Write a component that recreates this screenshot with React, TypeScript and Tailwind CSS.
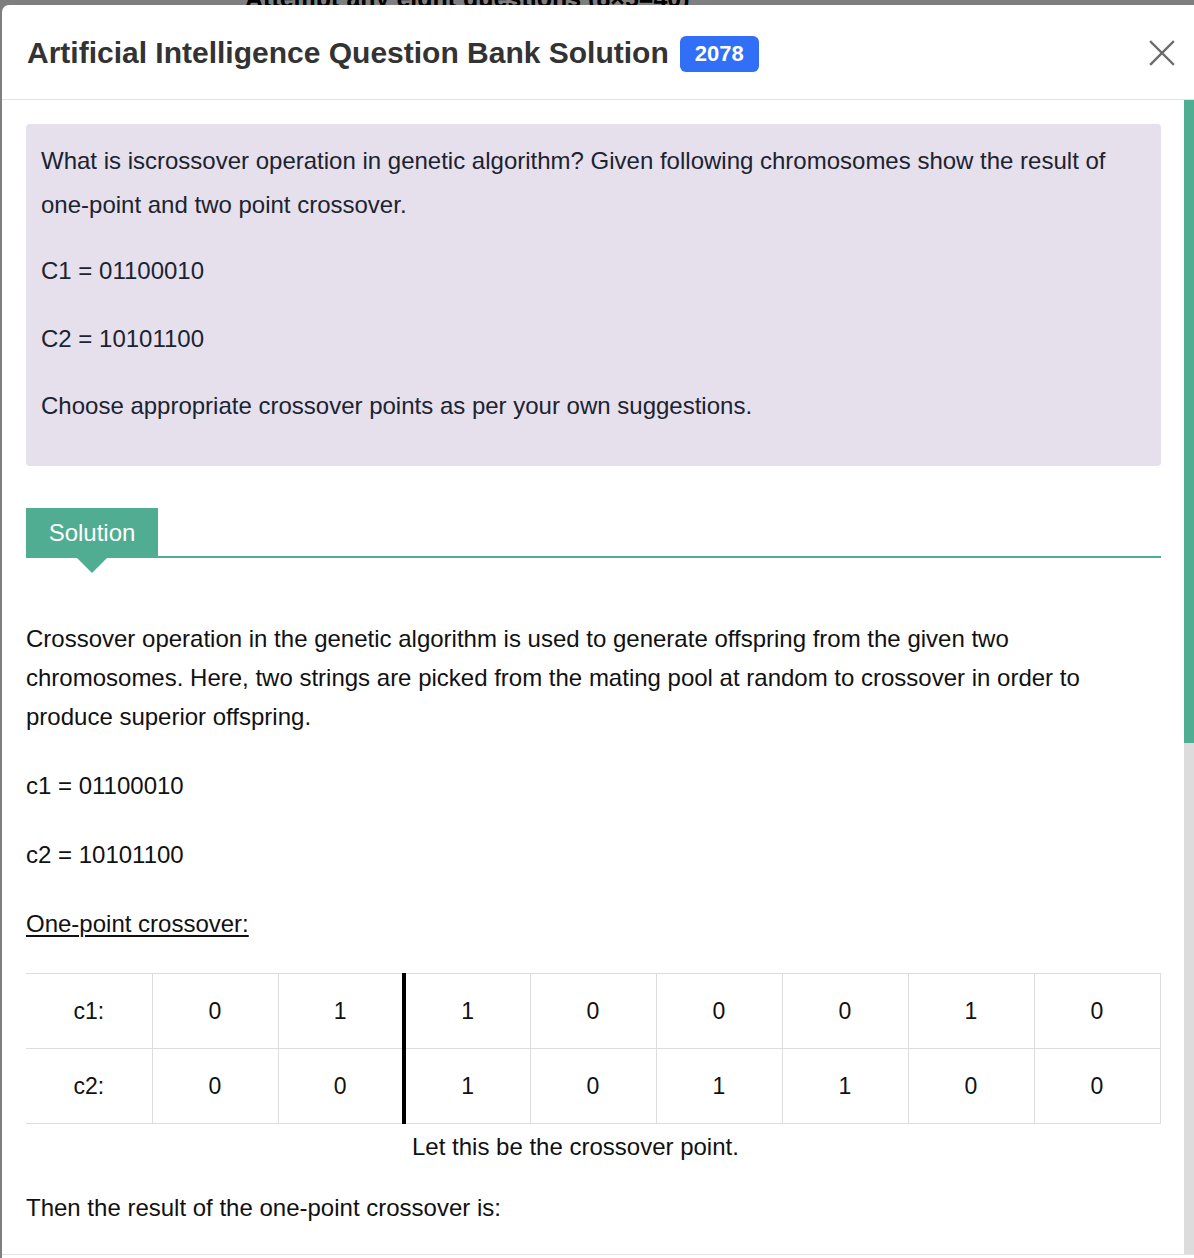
import React from 'react';

const c1 = ['0', '1', '1', '0', '0', '0', '1', '0'];
const c2 = ['0', '0', '1', '0', '1', '1', '0', '0'];

function CloseIcon() {
  return (
    <svg width="26" height="26" viewBox="0 0 26 26" fill="none">
      <path d="M2 2L24 24M24 2L2 24" stroke="#6b6b6b" strokeWidth="2.4" strokeLinecap="square" />
    </svg>
  );
}

function ChromosomeRow({ label, bits }: { label: string; bits: string[] }) {
  return (
    <tr className="h-[75px]">
      <td className="w-[126px] border-t border-b border-[#dddddd] text-center">{label}</td>
      {bits.map((b, i) => (
        <td
          key={i}
          className={`w-[126px] border border-[#dddddd] text-center ${i === 2 ? 'border-l-4 border-l-black' : ''}`}
        >
          {b}
        </td>
      ))}
    </tr>
  );
}

export default function App() {
  return (
    <div
      className="w-full h-[1258px] bg-[#7f7f7f] overflow-hidden flex flex-col pl-[2px]"
      style={{ fontFamily: '"Liberation Sans", Arial, Helvetica, sans-serif' }}
    >
      {/* backdrop strip behind the modal */}
      <div className="h-[5px] overflow-hidden shrink-0">
        <div className="-mt-[17px] pl-[243px] text-[25px] leading-[30px] font-bold text-black">
          Attempt any eight questions (8×5=40)
        </div>
      </div>

      <div className="flex-1 bg-white rounded-tl-[7px] flex flex-col min-h-0">
        {/* header */}
        <div className="h-[95px] shrink-0 flex items-center justify-between pl-[25px] pr-[18px] border-b border-[#e3e3e3]">
          <div className="flex items-center gap-[11px]">
            <h1 className="text-[30px] font-bold text-[#333333]">
              Artificial Intelligence Question Bank Solution
            </h1>
            <span className="h-[36px] px-[15px] rounded-[6px] bg-[#316ff6] text-white text-[22px] font-bold flex items-center mt-[3px]">
              2078
            </span>
          </div>
          <button className="p-[1px] mt-[2px]">
            <CloseIcon />
          </button>
        </div>

        {/* body */}
        <div className="flex-1 flex min-h-0">
          <div className="flex-1 pl-[24px] pr-[23px] pt-[24px] text-[24px] text-[#111111]">
            <div className="bg-[#e6dfec] rounded-[4px] px-[15px] pt-[15px] pb-[16px] text-[24px] leading-[44px] text-[#1c2330]">
              <p className="mb-[22px]">
                What is iscrossover operation in genetic algorithm? Given following chromosomes show the result of
                one-point and two point crossover.
              </p>
              <p className="mb-[24px]">C1 = 01100010</p>
              <p className="mb-[23px]">C2 = 10101100</p>
              <p className="mb-[22px]">Choose appropriate crossover points as per your own suggestions.</p>
            </div>

            <div className="mt-[42px] flex items-end">
              <div className="relative h-[50px] w-[132px] bg-[#50ad91] text-white text-[24px] flex items-center justify-center">
                Solution
                <div className="absolute left-[51px] top-[50px] w-0 h-0 border-l-[15px] border-r-[15px] border-t-[15px] border-l-transparent border-r-transparent border-t-[#50ad91]" />
              </div>
              <div className="flex-1 h-[2px] bg-[#50ad91]" />
            </div>

            <div className="mt-[61px] leading-[39px]">
              <p className="mb-[30px]">
                Crossover operation in the genetic algorithm is used to generate offspring from the given two
                chromosomes. Here, two strings are picked from the mating pool at random to crossover in order to
                produce superior offspring.
              </p>
              <p className="mb-[30px]">c1 = 01100010</p>
              <p className="mb-[30px]">c2 = 10101100</p>
              <p className="mb-[30px] underline underline-offset-[3px]">One-point crossover:</p>
            </div>

            <table className="w-full border-collapse table-fixed text-[23px]">
              <tbody>
                <ChromosomeRow label="c1:" bits={c1} />
                <ChromosomeRow label="c2:" bits={c2} />
              </tbody>
            </table>
            <p className="pl-[386px] leading-[46px]">Let this be the crossover point.</p>
            <p className="mt-[18px] leading-[39px]">Then the result of the one-point crossover is:</p>
          </div>

          {/* scrollbar */}
          <div className="w-[11px] shrink-0 bg-[#dcdcdc] flex flex-col">
            <div className="h-[643px] bg-[#4fae91]" />
          </div>
        </div>

        <div className="h-[4px] shrink-0 border-t border-[#e3e3e3]" />
      </div>
    </div>
  );
}
